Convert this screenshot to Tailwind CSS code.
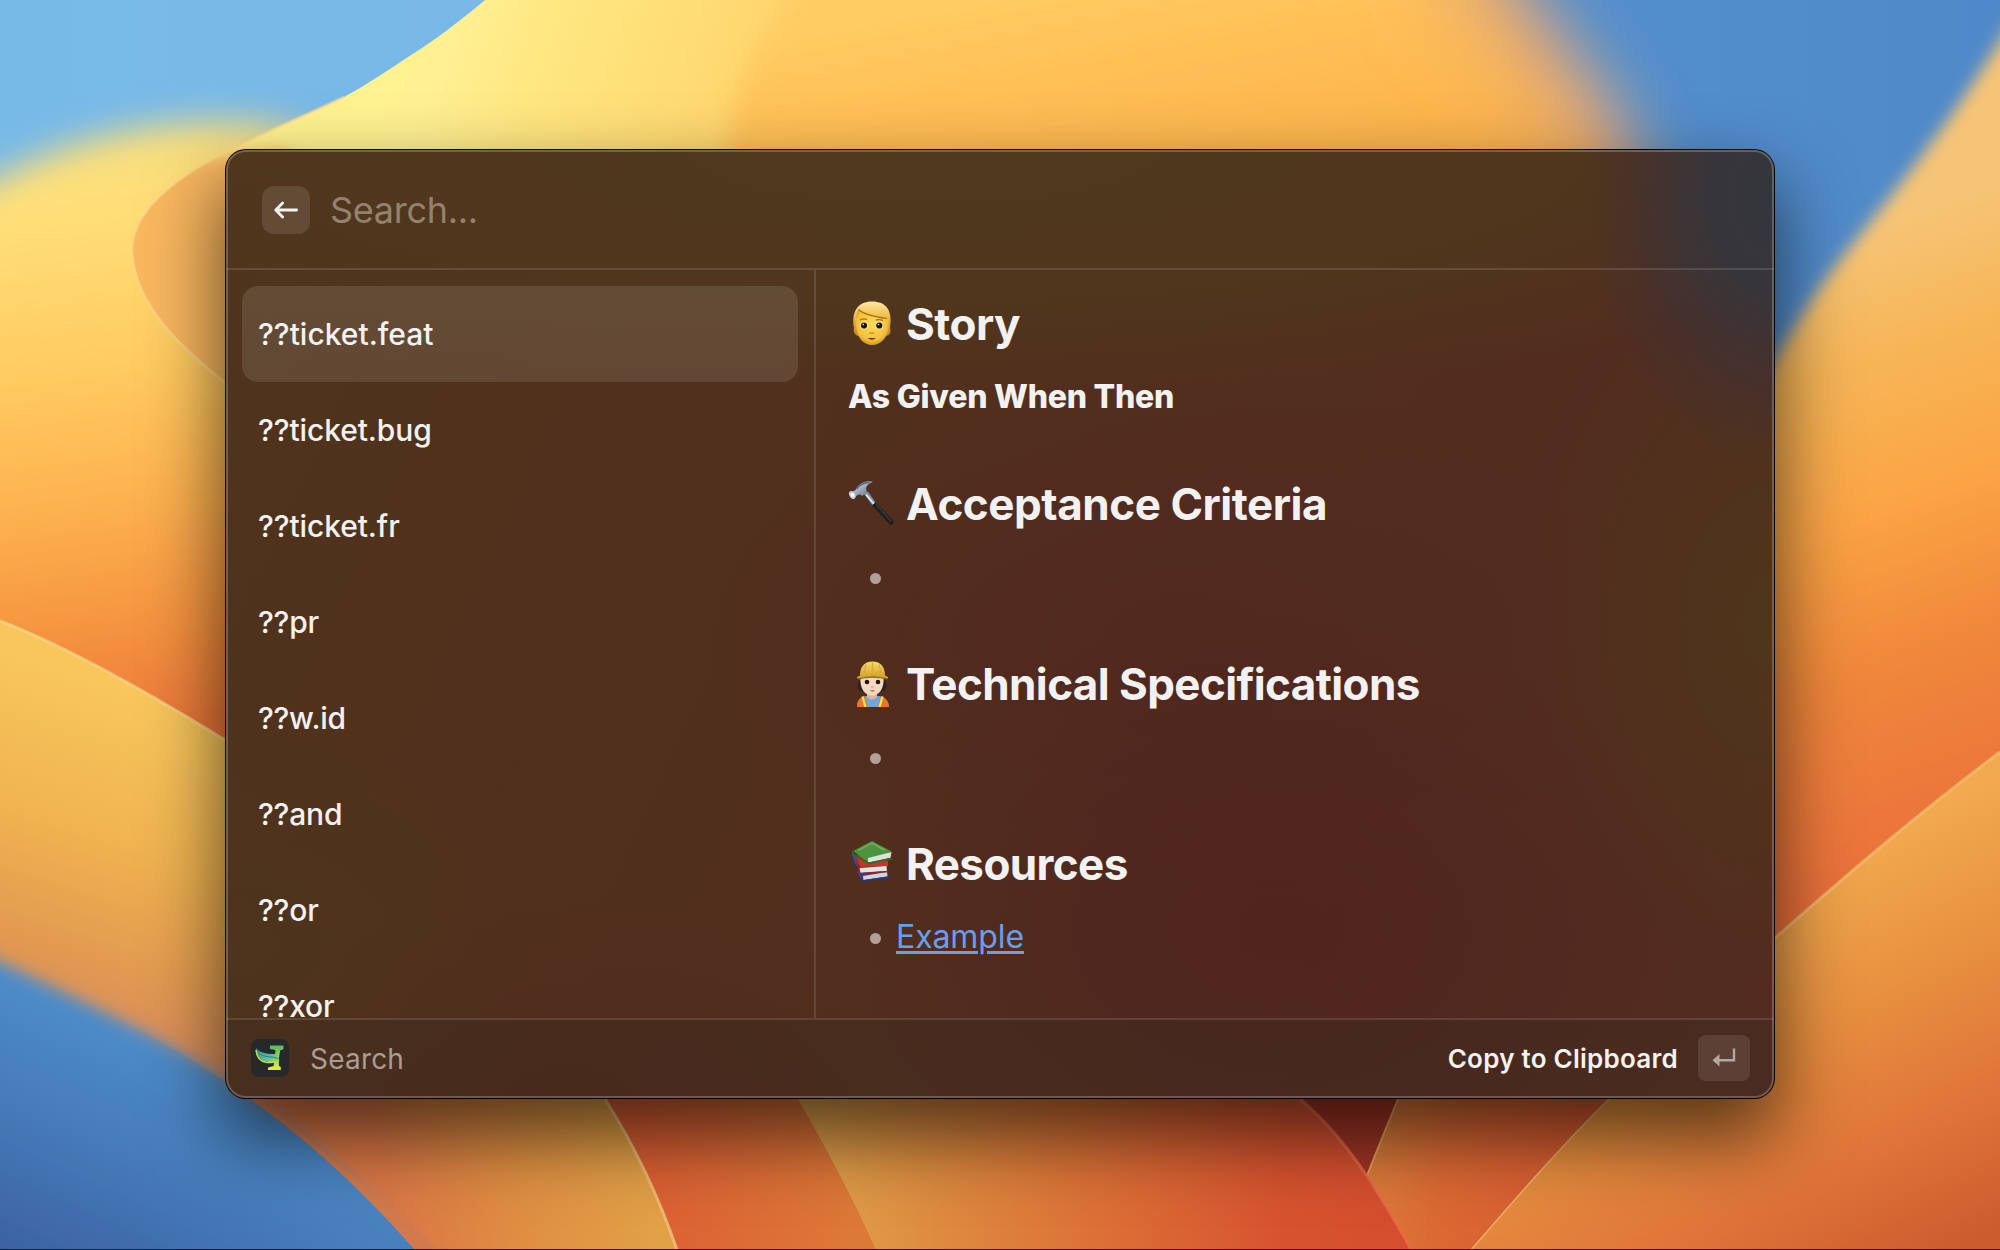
<!DOCTYPE html>
<html lang="en">
<head>
<meta charset="utf-8">
<title>Search</title>
<script src="https://cdn.jsdelivr.net/npm/@tailwindcss/browser@4"></script>
</head>
<body class="relative h-[1250px] w-[2000px] overflow-hidden bg-[#79b9e7] font-['Inter',sans-serif]">

<!-- Wallpaper -->
<svg class="absolute inset-0" width="2000" height="1250" viewBox="0 0 2000 1250" aria-hidden="true">
  <defs>
    <linearGradient id="sky" x1="0" x2="1" y1="0" y2="0"><stop offset="0" stop-color="#77bae8"/><stop offset=".24" stop-color="#79b8e7"/><stop offset=".75" stop-color="#5590ce"/><stop offset="1" stop-color="#4f89c9"/></linearGradient>
    <linearGradient id="hill" gradientUnits="userSpaceOnUse" x1="60" y1="120" x2="140" y2="740"><stop offset="0" stop-color="#f2dc80"/><stop offset=".13" stop-color="#ffe07a"/><stop offset=".4" stop-color="#ffcb61"/><stop offset=".62" stop-color="#fdb14f"/><stop offset=".82" stop-color="#f5933f"/><stop offset="1" stop-color="#ea7538"/></linearGradient>
    <linearGradient id="main" gradientUnits="userSpaceOnUse" x1="400" y1="60" x2="780" y2="190"><stop offset="0" stop-color="#fff290"/><stop offset=".1" stop-color="#fff092"/><stop offset=".35" stop-color="#ffe680"/><stop offset=".7" stop-color="#ffdb73"/><stop offset="1" stop-color="#ffcf67"/></linearGradient>
    <linearGradient id="fold" gradientUnits="userSpaceOnUse" x1="1000" y1="-10" x2="1040" y2="200"><stop offset="0" stop-color="#ffcc63"/><stop offset=".5" stop-color="#ffbf55"/><stop offset="1" stop-color="#fdb54d"/></linearGradient>
    <linearGradient id="rightPetal" gradientUnits="userSpaceOnUse" x1="1780" y1="260" x2="1990" y2="860"><stop offset="0" stop-color="#f6c476"/><stop offset=".2" stop-color="#f7b556"/><stop offset=".42" stop-color="#fba445"/><stop offset=".66" stop-color="#f0873a"/><stop offset="1" stop-color="#ea6e3b"/></linearGradient>
    <linearGradient id="lowerRight" gradientUnits="userSpaceOnUse" x1="1780" y1="880" x2="1960" y2="1250"><stop offset="0" stop-color="#f2aa4f"/><stop offset=".35" stop-color="#e8903f"/><stop offset=".7" stop-color="#df7339"/><stop offset="1" stop-color="#cc5b2e"/></linearGradient>
    <linearGradient id="lowerRed" gradientUnits="userSpaceOnUse" x1="820" y1="1200" x2="1400" y2="1200"><stop offset="0" stop-color="#e0a04a"/><stop offset=".2" stop-color="#de8b3f"/><stop offset=".5" stop-color="#dc6e36"/><stop offset=".8" stop-color="#d7532f"/><stop offset="1" stop-color="#d54e2e"/></linearGradient>
    <linearGradient id="band" gradientUnits="userSpaceOnUse" x1="640" y1="1200" x2="860" y2="1200"><stop offset="0" stop-color="#dc5f34"/><stop offset="1" stop-color="#dd7938"/></linearGradient>
    <linearGradient id="lowerLeft" gradientUnits="userSpaceOnUse" x1="120" y1="690" x2="20" y2="1000"><stop offset="0" stop-color="#f8c65c"/><stop offset=".45" stop-color="#f0b350"/><stop offset=".8" stop-color="#e39b50"/><stop offset="1" stop-color="#d98e5c"/></linearGradient>
    <linearGradient id="lowerLeft2" gradientUnits="userSpaceOnUse" x1="400" y1="1230" x2="640" y2="1170"><stop offset="0" stop-color="#db7846"/><stop offset=".45" stop-color="#e08d42"/><stop offset="1" stop-color="#e2a047"/></linearGradient>
    <linearGradient id="sea" gradientUnits="userSpaceOnUse" x1="150" y1="1010" x2="30" y2="1270"><stop offset="0" stop-color="#4f90cd"/><stop offset=".45" stop-color="#477dbb"/><stop offset="1" stop-color="#3c61a1"/></linearGradient>
    <linearGradient id="between" gradientUnits="userSpaceOnUse" x1="1380" y1="1150" x2="1560" y2="1190"><stop offset="0" stop-color="#db7c3b"/><stop offset=".35" stop-color="#dc6a34"/><stop offset="1" stop-color="#d85c31"/></linearGradient>
    <linearGradient id="toRight" gradientUnits="userSpaceOnUse" x1="110" y1="0" x2="300" y2="0"><stop offset="0" stop-color="#000"/><stop offset="1" stop-color="#fff"/></linearGradient>
    <filter id="b8" x="-20%" y="-20%" width="140%" height="140%"><feGaussianBlur stdDeviation="8"/></filter>
    <filter id="b12" x="-20%" y="-30%" width="140%" height="160%"><feGaussianBlur stdDeviation="12"/></filter>
    <filter id="b20" x="-30%" y="-30%" width="160%" height="160%"><feGaussianBlur stdDeviation="17"/></filter>
    <filter id="b30" x="-30%" y="-30%" width="160%" height="160%" color-interpolation-filters="sRGB"><feGaussianBlur stdDeviation="32"/></filter>
    <filter id="b40" x="-50%" y="-50%" width="200%" height="200%"><feGaussianBlur stdDeviation="45"/></filter>
    <clipPath id="petalClip"><path d="M485 0C450 29 432 42 408 57C387 71 366 85 344 97C308 114 272 129 236 147C190 169 132 205 132 250C134 305 178 346 240 395V700H2000V0z"/></clipPath>
    <mask id="upperFade" maskUnits="userSpaceOnUse" x="0" y="0" width="2000" height="1250" style="mask-type:alpha"><path d="M-200 -200H1410C1490 -60 1550 20 1600 83C1640 140 1690 230 1720 800H-200z" fill="#fff" filter="url(#b30)"/></mask>
    <mask id="seaSharp" maskUnits="userSpaceOnUse" x="0" y="900" width="500" height="350"><rect y="900" width="500" height="350" fill="url(#toRight)"/></mask>
  </defs>
  <rect width="2000" height="1250" fill="url(#sky)"/>
  <path d="M-60 215C40 140 150 118 240 122C330 120 420 200 420 260V800H-60z" fill="url(#hill)" filter="url(#b20)"/>

  <!-- Upper petal -->
  <g mask="url(#upperFade)">
    <g clip-path="url(#petalClip)">
      <rect width="2000" height="720" fill="url(#main)"/>
      <path d="M840 -60C780 10 740 60 730 130V240H1900V-60z" fill="url(#fold)" filter="url(#b12)"/>
      <path d="M1470 -80C1580 20 1650 130 1690 320" fill="none" stroke="#e0a47a" stroke-width="120" filter="url(#b40)"/>
      <path d="M90 180C150 165 220 150 290 150V420H90z" fill="#f9b75f" filter="url(#b8)"/>
    </g>
    <path d="M344 97C308 114 272 129 236 147C190 169 132 205 132 250C134 305 178 346 240 395" fill="none" stroke="#ffd98a" stroke-width="3" opacity=".6"/>
  </g>

  <!-- Right petals -->
  <path d="M2060 -60C2020 10 1975 85 1931 143C1890 200 1850 245 1823 283C1795 325 1780 350 1740 420V1300H2060z" fill="url(#rightPetal)" filter="url(#b8)"/>
  <path d="M2000 752C1920 812 1850 872 1775 938C1710 996 1655 1050 1608 1099C1560 1146 1510 1204 1470 1250H2000z" fill="url(#lowerRight)"/>
  <path d="M2000 752C1920 812 1850 872 1775 938C1710 996 1655 1050 1608 1099C1560 1146 1510 1204 1470 1250" fill="none" stroke="#f7c878" stroke-width="3" opacity=".6"/>

  <!-- Lower petals -->
  <path d="M500 1020H900L876 1250H600z" fill="url(#band)"/>
  <path d="M1240 1050H1430L1367 1180z" fill="#a23525"/>
  <path d="M1420 1050L1398 1099C1388 1124 1377 1150 1367 1176L1411 1250H1470C1510 1204 1560 1146 1608 1099L1660 1050z" fill="url(#between)"/>
  <path d="M1420 1050L1398 1099C1388 1124 1377 1150 1367 1176" fill="none" stroke="#e8a055" stroke-width="2"/>
  <path d="M760 1040H1240L1300 1099C1325 1120 1348 1148 1367 1176C1383 1201 1399 1226 1411 1250H876C852 1196 825 1146 798 1099z" fill="url(#lowerRed)"/>
  <path d="M1300 1099C1325 1120 1348 1148 1367 1176C1383 1201 1399 1226 1411 1250" fill="none" stroke="#ec6c48" stroke-width="3" opacity=".8"/>

  <!-- Bottom left -->
  <path d="M0 621C70 648 160 700 225 740L560 1020L605 1099C637 1150 660 1200 677 1250H0z" fill="url(#lowerLeft)"/>
  <path d="M228 1000H560L605 1099C637 1150 660 1200 677 1250H228z" fill="url(#lowerLeft2)"/>
  <path d="M0 621C70 648 160 700 225 740" fill="none" stroke="#fbd98c" stroke-width="3" opacity=".7"/>
  <path d="M605 1099C637 1150 660 1200 677 1250" fill="none" stroke="#f3c478" stroke-width="3" opacity=".8"/>
  <path d="M-80 925C60 990 160 1035 228 1084C290 1125 350 1176 415 1250L440 1330H-80z" fill="url(#sea)" filter="url(#b8)"/>
  <g mask="url(#seaSharp)">
    <path d="M228 1084L240 1080L440 1250H415z" fill="#d27a4c"/>
    <path d="M-80 925C60 990 160 1035 228 1084C290 1125 350 1176 415 1250H-80z" fill="url(#sea)"/>
  </g>
  <rect y="1249" width="2000" height="1" fill="#2a1a14"/>
</svg>

<!-- Window -->
<main class="relative mt-[150px] ml-[226px] flex h-[948px] w-[1548px] flex-col overflow-hidden rounded-[20px] bg-[#50301d] text-[#f2f2f2] shadow-[0_0_0_1px_#000,0_36px_76px_4px_rgba(0,0,0,0.62)]">
  <!-- Tinted glass -->
  <div class="absolute inset-0 bg-[radial-gradient(ellipse_190px_270px_at_100%_5%,#33363c_0%,#37353a_35%,#40303480_72%,transparent_100%),radial-gradient(ellipse_440px_320px_at_68%_82%,#4f221eb3_0%,#50241e99_45%,transparent_100%),radial-gradient(ellipse_240px_360px_at_100%_50%,#4f361b_0%,#4f351b99_50%,transparent_100%),radial-gradient(ellipse_480px_260px_at_62%_52%,#51281e_0%,transparent_100%),radial-gradient(ellipse_1100px_250px_at_45%_0%,#4f391d_0%,#50361d_60%,transparent_100%),radial-gradient(ellipse_340px_220px_at_0%_84%,#4e341c_0%,transparent_100%),radial-gradient(ellipse_400px_200px_at_22%_100%,#502a1d_0%,transparent_100%),linear-gradient(115deg,#4f341c_0%,#512f1d_40%,#532b20_100%)]"></div>

  <header class="relative flex h-[120px] shrink-0 items-center border-b-2 border-white/12 pt-0.5 pl-9">
    <button class="flex size-12 items-center justify-center rounded-xl bg-white/11" aria-label="Back">
      <svg width="24" height="18" viewBox="0 0 24 18" fill="none" stroke="#f5f3f1" stroke-width="2.8" stroke-linecap="round" stroke-linejoin="round"><path d="M8.600 2 1.800 9l6.800 7M2 9h20.600"/></svg>
    </button>
    <span class="ml-5 text-4xl tracking-[-0.3px] text-[#93826f]">Search...</span>
  </header>

  <div class="relative flex h-[748px] shrink-0">
    <ul class="w-[590px] shrink-0 overflow-hidden border-r-2 border-white/12 px-4 pt-4 text-3xl font-medium [&>li]:flex [&>li]:h-24 [&>li]:items-center [&>li]:rounded-2xl [&>li]:px-4">
      <li class="bg-white/11">??ticket.feat</li>
      <li class="tracking-[-0.1px]">??ticket.bug</li>
      <li class="tracking-[-0.1px]">??ticket.fr</li>
      <li class="tracking-[-0.2px]">??pr</li>
      <li class="tracking-[-0.3px]">??w.id</li>
      <li class="tracking-[-0.2px]">??and</li>
      <li class="tracking-[-0.2px]">??or</li>
      <li class="tracking-[-0.2px]">??xor</li>
    </ul>

    <article class="flex-1 px-8 pt-6">
      <section class="h-[180px]">
        <h2 class="flex h-[60px] items-center gap-3 text-[44px] font-bold tracking-[-0.5px]">
          <svg width="46" height="46" viewBox="0 0 46 46">
            <defs><radialGradient id="skin" cx=".5" cy=".4" r=".65"><stop offset="0" stop-color="#ffdb57"/><stop offset=".7" stop-color="#f5c13a"/><stop offset="1" stop-color="#c98a22"/></radialGradient><linearGradient id="hair" x1="0" y1="0" x2="0" y2="1"><stop offset="0" stop-color="#ffe9a2"/><stop offset=".4" stop-color="#f0c050"/><stop offset="1" stop-color="#c08420"/></linearGradient></defs>
            <path d="M6 27C3 10 10 .5 24 .5S45 9 42 27c1 3 .5 6-2 7.500L10 35c-3-1-5-4-4-8z" fill="url(#hair)"/>
            <path d="M8 25C8 16 8.500 12 10.500 8.500c7 5.500 19 7.500 28 9 1.500 2 2 5 2 9.500-1 10-8 17-16.500 17S8.500 36 8 25z" fill="url(#skin)"/>
            <path d="M10.500 8.500c6 5.500 17 7.500 28.500 9" fill="none" stroke="#a86f18" stroke-width="1.200"/>
            <ellipse cx="16" cy="24.500" rx="4" ry="4" fill="#fbe9b5"/><ellipse cx="31.300" cy="24.500" rx="4" ry="4" fill="#fbe9b5"/>
            <circle cx="16" cy="24.500" r="3.100" fill="#25170e"/><circle cx="31.300" cy="24.500" r="3.100" fill="#25170e"/><circle cx="15.300" cy="23.500" r=".8" fill="#fff"/><circle cx="30.500" cy="23.500" r=".8" fill="#fff"/>
            <path d="M12 19q4-2 7-.5M28 19q4-1 7 .5" stroke="#a86f18" stroke-width="1.300" fill="none"/>
            <path d="M21.500 31.500q2.300 1.800 4.300 0" stroke="#c98022" stroke-width="1.400" fill="none"/><path d="M19.500 37h8.500q-4 3.500-8.500 0z" fill="#6b3211"/>
          </svg>
          <span>Story</span>
        </h2>
        <p class="mt-[19px] flex h-12 items-center text-[32px] font-extrabold tracking-[-0.25px]">As Given When Then</p>
      </section>

      <section class="h-[180px]">
        <h2 class="flex h-[60px] items-center gap-3 text-[44px] font-bold tracking-[-0.45px]">
          <svg width="46" height="46" viewBox="0 0 46 46">
            <defs><linearGradient id="steel" x1="0" y1="0" x2="1" y2="1"><stop offset="0" stop-color="#e4ebf2"/><stop offset=".5" stop-color="#97a5b6"/><stop offset="1" stop-color="#5b6877"/></linearGradient></defs>
            <path d="M16 13l4-2.500 7.500 11-3 3z" fill="#7f91a8"/><path d="M18 13.500l8 9.500" stroke="#eaf2fb" stroke-width="1.500"/>
            <path d="M24 24.500l3.500-3 18 18.500q.5 3-3 4z" fill="#1d1e20"/><path d="M28 23.500l15.500 17" stroke="#3c3e42" stroke-width="1.200"/>
            <path d="M4 11l3.500-2Q10 3.500 15.500 1.500 20-.5 25 .8q-5.500 2-7 6.200 1 3.500.5 5l-4.500 3q-3-3-6 .5l-3 1z" fill="url(#steel)"/>
            <path d="M8.500 8q4-6 13-6.700" stroke="#4f688a" stroke-width="1.600" fill="none"/>
            <ellipse cx="4.300" cy="14" rx="2.800" ry="4.200" transform="rotate(-30 4.300 14)" fill="#c9d3dd"/><circle cx="4.500" cy="14" r="1.800" fill="#fff"/>
          </svg>
          <span>Acceptance Criteria</span>
        </h2>
        <ul class="mt-[18px]"><li class="flex h-12 items-center pl-[21.500px] text-[32px]"><i class="mt-1 size-[11px] rounded-full bg-[#b1a09b]"></i></li></ul>
      </section>

      <section class="h-[180px]">
        <h2 class="flex h-[60px] items-center gap-3 text-[44px] font-bold tracking-[-0.6px]">
          <svg width="46" height="46" viewBox="0 0 46 46">
            <defs><linearGradient id="hat" x1="0" y1="0" x2="0" y2="1"><stop offset="0" stop-color="#f7dc66"/><stop offset="1" stop-color="#d09c24"/></linearGradient></defs>
            <path d="M13 15h22q3 6 3.500 10-1 5-5.500 5.500H15q-5-.5-5.500-5.500 1-5 3.500-10z" fill="#2b211d"/>
            <path d="M9 46q0-10 9-11h13q9 1 10 11z" fill="#6ea6e0"/>
            <path d="M19 30h10v6q-5 5-10 0z" fill="#dcb699"/>
            <path d="M12.500 16h23c1 11-4 18.500-11.500 18.500S11.500 27 12.500 16z" fill="#f3d8c2"/>
            <path d="M9 46q0-9 7.500-11L20 46z" fill="#ee7426"/><path d="M41 46q-1-9-8-11l-3.500 11z" fill="#ee7426"/>
            <path d="M14.500 35.500l3 10.500M34.500 35.500l-3 10.500" stroke="#f5e85a" stroke-width="2.200"/>
            <path d="M12 14.500C12 5 17 .5 24.500.5S37 5 37 14.500l3 1.500v1.500q-15-3.500-31 0V16z" fill="url(#hat)"/><path d="M18 3.500q-1.500 4-1.500 9M24.500 1.500v10M31 3.500q1.500 4 1.500 9" stroke="#d9aa38" stroke-width="1.200" fill="none"/><path d="M10 17.800q14-3.300 29.500 0" stroke="#93690f" stroke-width="1.200" fill="none"/>
            <circle cx="19" cy="21" r="2.300" fill="#20150f"/><circle cx="30" cy="21" r="2.300" fill="#20150f"/><path d="M22 29.500h5q-2.500 2.200-5 0z" fill="#7c3320"/><path d="M23 26h3" stroke="#d8a888" stroke-width="1.200"/>
          </svg>
          <span>Technical Specifications</span>
        </h2>
        <ul class="mt-[18px]"><li class="flex h-12 items-center pl-[21.500px] text-[32px]"><i class="mt-1 size-[11px] rounded-full bg-[#b1a09b]"></i></li></ul>
      </section>

      <section class="h-[180px]">
        <h2 class="flex h-[60px] items-center gap-3 text-[44px] font-bold tracking-[-0.6px]">
          <svg class="-mt-1.5" width="46" height="46" viewBox="0 0 46 46">
            <path d="M8 34l7 9 26-3-2-6-14-5z" fill="#2a3f9c"/><path d="M15 38l24-4 .5 4.500-24 3.500z" fill="#d4d4d0"/><path d="M14 43l27-4" stroke="#233685" stroke-width="1.500"/>
            <path d="M4 17l4 11 5-2-5-9z" fill="#2f4db0"/>
            <path d="M7 17l33 4-1 5-28 1z" fill="#c9302a"/><path d="M9 20l3 9 28-1v-4z" fill="#c8332c"/>
            <path d="M11.500 30l27-2 .5 5-26.500 2z" fill="#e4e3de"/><path d="M9 21q1 12 3 14.500l28-2" stroke="#9f211d" stroke-width="1.500" fill="none"/>
            <path d="M5 13L24 3l19.500 10.500L20 24z" fill="#4c9440"/><path d="M10 12.500L24 5.200l13 7" stroke="#76b566" stroke-width="1.400" fill="none"/>
            <path d="M20 20l23.500-6-1 6L20 24.500z" fill="#dfe0d8"/><path d="M5 13q-1 3 1 4l15 8.500 22.500-5" stroke="#2c6b29" stroke-width="2" fill="none"/>
          </svg>
          <span>Resources</span>
        </h2>
        <ul class="mt-[18px]"><li class="flex h-12 items-center pl-[21.500px] text-[32px]"><i class="mt-1 size-[11px] rounded-full bg-[#b1a09b]"></i><a class="mt-px ml-[15.500px] tracking-[-0.1px] text-[#659ff0] underline decoration-[2.500px] underline-offset-[3px]">Example</a></li></ul>
      </section>
    </article>
  </div>

  <footer class="relative flex h-20 shrink-0 items-center border-t-2 border-white/12 bg-[#3a2a20]/35 pr-6 pb-0.5 pl-[25px]">
    <svg width="38" height="38" viewBox="0 0 38 38">
      <defs><linearGradient id="anvil" x1="0" y1="0" x2="0" y2="1"><stop offset="0" stop-color="#57b86a"/><stop offset="1" stop-color="#e8ef3c"/></linearGradient><linearGradient id="horn" x1="0" y1="0" x2="1" y2="1"><stop offset="0" stop-color="#2a8f8c"/><stop offset=".6" stop-color="#5cbf9b"/><stop offset="1" stop-color="#a8dc58"/></linearGradient></defs>
      <rect width="38" height="38" rx="8" fill="#262829"/>
      <path d="M19 6.500h13.500v3.800L29.300 11.200l-1.500 8 .2 7.800 1.800 1v3H17v-2.500l5.500-1.500 1-6 1-10-5.500-1z" fill="url(#anvil)"/>
      <path d="M5 9q5 6.500 19.500 6l4 7q-7 2-13.500.500Q5 20 5 9z" fill="url(#horn)"/>
      <path d="M5.500 10.500q3 6.500 10.500 7 7 .5 11 2" stroke="#2b7f86" stroke-width="1" fill="none"/>
      <path d="M5 11q1 11 10 12.300 6 .5 9-.5" stroke="#c3e04a" stroke-width="1.500" fill="none"/>
    </svg>
    <span class="mt-px ml-[21px] text-[28px] tracking-[0.2px] text-[#ab9c94]">Search</span>
    <span class="ml-auto text-[26px] font-semibold tracking-[0.25px]">Copy to Clipboard</span>
    <kbd class="ml-5 flex h-[46px] w-[52px] items-center justify-center rounded-lg bg-white/10">
      <svg class="mt-[-3px]" width="24" height="20" viewBox="0 0 24 20"><path d="M22 1.500v11.700H6" fill="none" stroke="#b3a7a1" stroke-width="2.400"/><path d="M.5 13.200L7.500 7v12.400z" fill="#b3a7a1"/></svg>
    </kbd>
  </footer>

  <div class="pointer-events-none absolute inset-0 rounded-[20px] border-2 border-white/22"></div>
</main>
</body>
</html>
